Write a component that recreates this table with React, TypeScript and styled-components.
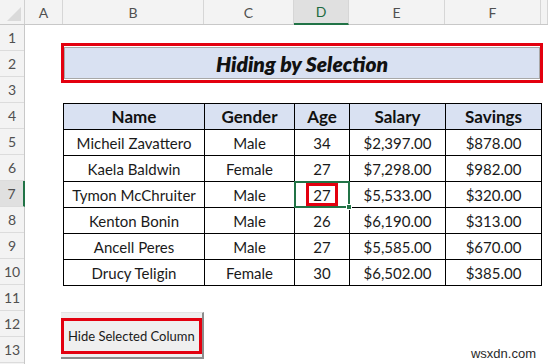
import styled, { createGlobalStyle } from 'styled-components';

const GlobalStyle = createGlobalStyle`
  html, body {
    margin: 0;
    padding: 0;
    background: #ffffff;
    overflow: hidden;
  }
  * {
    box-sizing: border-box;
  }
`;

const FONT = `Lato, 'Liberation Sans', sans-serif`;

const Sheet = styled.div`
  position: relative;
  width: 548px;
  height: 364px;
  display: flex;
  flex-direction: column;
  font-family: ${FONT};
  color: #1a1a1a;
  overflow: hidden;
`;

const HeaderBar = styled.div`
  display: flex;
  height: 25px;
  background: #f3f3f3;
  border-bottom: 1px solid #c8c8c8;
`;

const Corner = styled.div`
  position: relative;
  width: 25px;
  flex: none;
  border-right: 1px solid #d0d0d0;
  &::after {
    content: '';
    position: absolute;
    right: 3px;
    bottom: 3px;
    border-left: 14px solid transparent;
    border-bottom: 14px solid #dadada;
  }
`;

const ColHead = styled.div<{ $w?: number; $active?: boolean }>`
  width: ${(p) => (p.$w ? `${p.$w}px` : 'auto')};
  flex: ${(p) => (p.$w ? 'none' : '1')};
  display: flex;
  align-items: center;
  justify-content: center;
  font-size: 14px;
  color: ${(p) => (p.$active ? '#1d6b40' : '#505050')};
  background: ${(p) => (p.$active ? '#e0e0e0' : 'transparent')};
  border-right: 1px solid #d6d6d6;
  border-bottom: ${(p) => (p.$active ? '2px solid #217346' : 'none')};
  margin-bottom: ${(p) => (p.$active ? '-1px' : '0')};
`;

const Body = styled.div`
  display: flex;
  flex: 1;
`;

const RowHeads = styled.div`
  width: 25px;
  flex: none;
  display: flex;
  flex-direction: column;
  background: #f3f3f3;
  border-right: 1px solid #c8c8c8;
`;

const RowHead = styled.div<{ $active?: boolean }>`
  height: 26px;
  flex: none;
  display: flex;
  align-items: center;
  justify-content: center;
  font-size: 14px;
  color: #505050;
  border-bottom: 1px solid #dcdcdc;
  background: ${(p) => (p.$active ? '#e0e0e0' : 'transparent')};
  border-right: ${(p) => (p.$active ? '2px solid #217346' : 'none')};
  margin-right: ${(p) => (p.$active ? '-1px' : '0')};
`;

const Canvas = styled.div`
  flex: 1;
  display: flex;
  flex-direction: column;
  align-items: flex-start;
`;

const TitleFrame = styled.div`
  margin: 18px 0 0 36px;
  width: 482px;
  height: 40px;
  border: 3px solid #e3000f;
  padding: 1px 0;
`;

const TitleInner = styled.div`
  height: 100%;
  display: flex;
  align-items: center;
  justify-content: center;
  background: #d9e1f2;
  border: 1px solid #a8a8a8;
  font-size: 21px;
  font-weight: 800;
  font-style: italic;
  color: #111;
`;

const Table = styled.table`
  margin: 20px 0 0 38px;
  border-collapse: collapse;
  table-layout: fixed;
  width: 478px;
`;

const Th = styled.th`
  height: 26px;
  padding: 0;
  border: 1px solid #000;
  background: #d9e1f2;
  font-size: 17px;
  font-weight: 700;
  color: #111;
  text-align: center;
`;

const Td = styled.td`
  position: relative;
  height: 26px;
  padding: 0;
  border: 1px solid #000;
  font-size: 15px;
  text-align: center;
  color: #1a1a1a;
`;

const Selection = styled.div`
  position: absolute;
  inset: -1px;
  border: 2px solid #217346;
  pointer-events: none;
`;

const FillHandle = styled.div`
  position: absolute;
  right: -4px;
  bottom: -4px;
  width: 6px;
  height: 6px;
  background: #217346;
  border: 1px solid #fff;
`;

const Marked = styled.span`
  display: inline-flex;
  align-items: center;
  justify-content: center;
  width: 32px;
  height: 23px;
  border: 3px solid #e3000f;
  vertical-align: middle;
`;

const MacroButton = styled.div`
  margin: 26px 0 0 36px;
  width: 143px;
  height: 47px;
  padding: 5px 0 3px 0;
  background: #efefef;
  border-top: 1px solid #e4e4e4;
  border-right: 2px solid #8c8c8c;
  border-bottom: 2px solid #8c8c8c;
`;

const ButtonFace = styled.div`
  height: 100%;
  display: flex;
  align-items: center;
  padding-left: 4px;
  border: 3px solid #e3000f;
  font-size: 13px;
  color: #1a1a1a;
  white-space: nowrap;
`;

const Watermark = styled.div`
  position: absolute;
  right: 12px;
  bottom: 3px;
  font-family: 'Liberation Sans', Arial, sans-serif;
  font-size: 13px;
  color: #2a2a2a;
`;

const columns = [
  { label: 'A', w: 38 },
  { label: 'B', w: 141 },
  { label: 'C', w: 90 },
  { label: 'D', w: 55, active: true },
  { label: 'E', w: 96 },
  { label: 'F', w: 96 },
  { label: '' },
];

const people = [
  ['Micheil Zavattero', 'Male', '34', '$2,397.00', '$878.00'],
  ['Kaela Baldwin', 'Female', '27', '$7,298.00', '$982.00'],
  ['Tymon McChruiter', 'Male', '27', '$5,533.00', '$320.00'],
  ['Kenton Bonin', 'Male', '26', '$6,190.00', '$313.00'],
  ['Ancell Peres', 'Male', '27', '$5,585.00', '$670.00'],
  ['Drucy Teligin', 'Female', '30', '$6,502.00', '$385.00'],
];

function App() {
  return (
    <Sheet>
      <GlobalStyle />
      <HeaderBar>
        <Corner />
        {columns.map((c, i) => (
          <ColHead key={i} $w={c.w} $active={c.active}>
            {c.label}
          </ColHead>
        ))}
      </HeaderBar>
      <Body>
        <RowHeads>
          {Array.from({ length: 13 }, (_, i) => (
            <RowHead key={i} $active={i === 6}>
              {i + 1}
            </RowHead>
          ))}
        </RowHeads>
        <Canvas>
          <TitleFrame>
            <TitleInner>Hiding by Selection</TitleInner>
          </TitleFrame>
          <Table>
            <colgroup>
              <col style={{ width: 141 }} />
              <col style={{ width: 90 }} />
              <col style={{ width: 55 }} />
              <col style={{ width: 96 }} />
              <col style={{ width: 96 }} />
            </colgroup>
            <thead>
              <tr>
                <Th>Name</Th>
                <Th>Gender</Th>
                <Th>Age</Th>
                <Th>Salary</Th>
                <Th>Savings</Th>
              </tr>
            </thead>
            <tbody>
              {people.map((row, r) => (
                <tr key={r}>
                  {row.map((cell, c) => {
                    const selected = r === 2 && c === 2;
                    return (
                      <Td key={c}>
                        {selected ? <Marked>{cell}</Marked> : cell}
                        {selected && (
                          <Selection>
                            <FillHandle />
                          </Selection>
                        )}
                      </Td>
                    );
                  })}
                </tr>
              ))}
            </tbody>
          </Table>
          <MacroButton>
            <ButtonFace>Hide Selected Column</ButtonFace>
          </MacroButton>
        </Canvas>
      </Body>
      <Watermark>wsxdn.com</Watermark>
    </Sheet>
  );
}

export default App;
